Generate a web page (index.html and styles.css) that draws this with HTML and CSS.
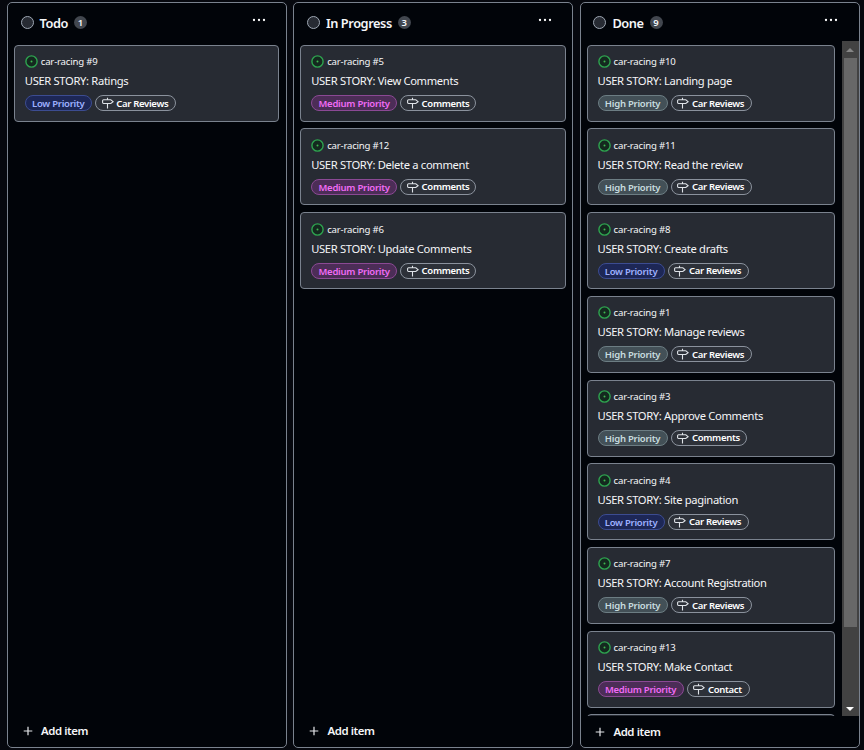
FILE: index.html
```
<!DOCTYPE html>
<html lang="en">
<head>
<meta charset="utf-8">
<title>Project board</title>
<link rel="stylesheet" href="styles.css">
</head>
<body>
<svg class="defs" aria-hidden="true">
  <symbol id="open" viewBox="0 0 13 13"><circle cx="6.5" cy="6.5" r="5.6" fill="#14291f" stroke="#2ea44f" stroke-width="1.4"/><circle cx="6.5" cy="6.5" r="1" fill="#3fb950"/></symbol>
  <symbol id="sign" viewBox="0 0 12 12"><path d="M5.5 .8v2M5.5 6.5v5M1.5 2.8h7.3l2.3 1.85-2.3 1.85H1.5a.9.9 0 0 1-.9-.9V3.7a.9.9 0 0 1 .9-.9z" fill="none" stroke="#dfe3e8" stroke-width="1.1"/></symbol>
  <symbol id="plus" viewBox="0 0 10 10"><path d="M5 .7v8.6M.7 5h8.6" stroke="#e6e8eb" stroke-width="1.2"/></symbol>
  <symbol id="dots" viewBox="0 0 14 4"><circle cx="2" cy="2" r="1.15" fill="#fff"/><circle cx="7" cy="2" r="1.15" fill="#fff"/><circle cx="12" cy="2" r="1.15" fill="#fff"/></symbol>
</svg>
<main class="board" id="board"></main>
<script src="board.js"></script>
</body>
</html>
```
FILE: board.js
```
const columns = [
  { name: 'Todo', count: 1, items: [[9, 'Ratings', 'Low', 'Car Reviews']] },
  { name: 'In Progress', count: 3, items: [
    [5, 'View Comments', 'Medium', 'Comments'],
    [12, 'Delete a comment', 'Medium', 'Comments'],
    [6, 'Update Comments', 'Medium', 'Comments']
  ] },
  { name: 'Done', count: 9, scroll: true, items: [
    [10, 'Landing page', 'High', 'Car Reviews'],
    [11, 'Read the review', 'High', 'Car Reviews'],
    [8, 'Create drafts', 'Low', 'Car Reviews'],
    [1, 'Manage reviews', 'High', 'Car Reviews'],
    [3, 'Approve Comments', 'High', 'Comments'],
    [4, 'Site pagination', 'Low', 'Car Reviews'],
    [7, 'Account Registration', 'High', 'Car Reviews'],
    [13, 'Make Contact', 'Medium', 'Contact'],
    null
  ] }
];
const icon = (id) => `<svg class="icon-${id}"><use href="#${id}"/></svg>`;
const card = (item) => {
  if (!item) return '<article class="card"></article>';
  const [number, title, priority, milestone] = item;
  return `<article class="card">
    <div class="ref">${icon('open')}<span>car-racing #${number}</span></div>
    <h3 class="title">USER STORY: ${title}</h3>
    <div class="labels"><span class="pill ${priority.toLowerCase()}">${priority} Priority</span><span class="pill milestone ${milestone.split(' ')[0].toLowerCase()}">${icon('sign')}<span>${milestone}</span></span></div>
  </article>`;
};
document.getElementById('board').innerHTML = columns.map((c) => `
  <section class="column${c.scroll ? ' scrolling' : ''}">
    <header class="head"><i class="status"></i><h2>${c.name}</h2><span class="count">${c.count}</span>${icon('dots')}</header>
    <div class="body"><div class="cards">${c.items.map(card).join('')}</div>${c.scroll ? '<div class="bar"><i class="up"></i><i class="thumb"></i><i class="down"></i></div>' : ''}</div>
    <footer class="add">${icon('plus')}<span>Add item</span></footer>
  </section>`).join('');
```
FILE: styles.css
```
* { box-sizing: border-box; }
body { margin: 0; height: 750px; overflow: hidden; background: #06080e; color: #f5f6f8; font-family: "Noto Sans", "Open Sans", sans-serif; }
h2, h3 { margin: 0; }
svg { flex: none; display: block; }
.defs { position: absolute; width: 0; height: 0; }
.board { display: grid; grid-template-columns: repeat(3, 280px); gap: 6.4px; padding: 2px 0 0 7px; height: 748px; }
.column { display: flex; flex-direction: column; min-height: 0; border: 1px solid #7a828e; border-radius: 5px; background: #010409; }
.head { display: flex; align-items: center; flex: none; height: 38px; padding: 1px 20.4px 0 12.6px; }
.status { width: 13px; height: 13px; border: 1px solid #9ea7b3; border-radius: 50%; background: #272b33; }
h2 { margin-left: 6px; padding-top: 1px; font-size: 12.8px; line-height: 18px; font-weight: 600; letter-spacing: -0.45px; white-space: nowrap; }
.count { margin-left: 6px; min-width: 13px; height: 13px; padding: 0 3.5px; border-radius: 7px; background: #42474f; font-size: 9.5px; line-height: 13px; font-weight: 600; text-align: center; }
.icon-dots { width: 14px; height: 4px; margin: -5px 0 0 auto; }
.body { display: flex; flex: 1; min-height: 0; overflow: hidden; }
.cards { display: flex; flex: 1; flex-direction: column; gap: 6.7px; padding: 3.8px 6.9px 0 6.1px; overflow: hidden; }
.card { flex: none; height: 77px; padding: 9px 9.7px; border: 1px solid #7a828e; border-radius: 4px; background: #272b33; }
.ref { display: flex; align-items: center; height: 14px; gap: 3px; font-size: 9.6px; letter-spacing: -0.2px; }
.icon-open { width: 13px; height: 13px; }
.title { height: 17px; margin-top: 3.4px; font-size: 11.2px; line-height: 17px; font-weight: 400; letter-spacing: -0.33px; white-space: nowrap; }
.labels { display: flex; gap: 3px; margin-top: 6px; }
.pill { height: 16px; border: 1px solid; border-radius: 8px; font-size: 9.5px; line-height: 15px; font-weight: 600; letter-spacing: -0.25px; text-align: center; white-space: nowrap; }
.low { width: 67px; color: #9eb0ff; background: #1d2756; border-color: #3c4c91; }
.medium { width: 86px; color: #f06bf5; background: #4c2d57; border-color: #8b4994; }
.high { width: 70px; color: #c7dcdf; background: #435057; border-color: #6c7d83; }
.milestone { display: flex; align-items: center; gap: 2.6px; padding-left: 5.8px; border-color: #8b929d; background: #2d3139; color: #fff; letter-spacing: -0.3px; }
.car { width: 81px; }
.comments { width: 76px; }
.contact { width: 63px; }
.icon-sign { width: 12px; height: 12px; }
.add { display: flex; align-items: center; flex: none; height: 32px; padding: 0 0 1px 15px; gap: 8px; font-size: 11.4px; font-weight: 600; letter-spacing: -0.4px; }
.icon-plus { width: 10px; height: 10px; }
.scrolling .add { height: 31px; padding: 0 0 0 14.6px; }
.bar { display: flex; flex-direction: column; align-items: center; width: 17px; background: #424242; }
.thumb { width: 13px; height: 569px; background: #686868; }
.up, .down { width: 0; height: 0; border: 4px solid transparent; }
.up { margin: 3px 0 6px; border-bottom-color: #868686; }
.down { margin: auto 0 1px; border-top-color: #fff; }
```
